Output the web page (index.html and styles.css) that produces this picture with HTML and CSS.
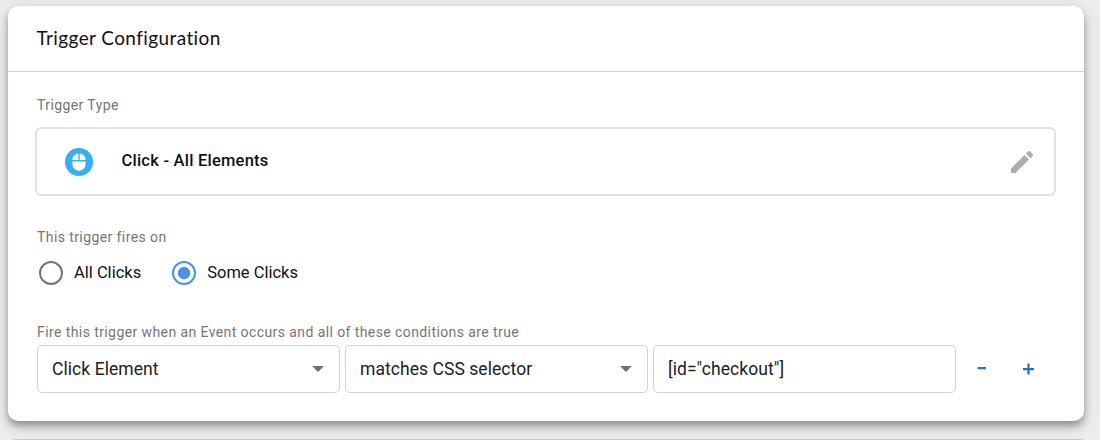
FILE: index.html
```html
<!DOCTYPE html>
<html lang="en">
<head>
<meta charset="utf-8">
<title>Trigger Configuration</title>
<link rel="stylesheet" href="styles.css">
</head>
<body>
<main class="card">
  <header class="card-header"><h1 class="title">Trigger Configuration</h1></header>
  <div class="card-body">
    <div class="label label-type"><span>Trigger Type</span></div>
    <section class="type-box">
      <svg class="type-icon" viewBox="0 0 28 28">
        <circle cx="14" cy="14" r="14" fill="#36aff0"/>
        <path fill="#fff" d="M13.3 5.5V12H7.4v-.4c0-3.3 2.6-5.9 5.9-6.1zM14.7 5.5c3.3.2 5.9 2.8 5.9 6.1v.4h-5.9zM7.4 13.4h13.2v2.8a6.6 6.6 0 0 1-13.2 0z"/>
      </svg>
      <span class="type-name">Click - All Elements</span>
      <svg class="edit-icon" viewBox="3 3 18 18">
        <path fill="#aeaeae" d="M3 17.25V21h3.75L17.81 9.94l-3.75-3.75L3 17.25zM20.71 7.04a1 1 0 0 0 0-1.41l-2.34-2.34a1 1 0 0 0-1.41 0l-1.83 1.83 3.75 3.75 1.83-1.83z"/>
      </svg>
    </section>
    <div class="label label-fires"><span>This trigger fires on</span></div>
    <div class="radios">
      <div class="radio"><span class="ring"></span><span class="radio-text">All Clicks</span></div>
      <div class="radio"><span class="ring checked"></span><span class="radio-text">Some Clicks</span></div>
    </div>
    <div class="label label-conditions"><span>Fire this trigger when an Event occurs and all of these conditions are true</span></div>
    <div class="conditions">
      <div class="field"><span>Click Element</span><i class="arrow"></i></div>
      <div class="field"><span>matches CSS selector</span><i class="arrow"></i></div>
      <div class="field"><span>[id="checkout"]</span></div>
      <svg class="actions" viewBox="0 0 60 14">
        <path fill="#3367d6" d="M1.5 5H10v2.2H1.5zM47 6h4.4V1.500h2.200V6H58v2.200h-4.400v4.400h-2.200V8.200H47z"/>
      </svg>
    </div>
  </div>
</main>
<div class="next-card"></div>
</body>
</html>
```
FILE: styles.css
```css
* { box-sizing: border-box; }
body {
  margin: 0;
  height: 440px;
  overflow: hidden;
  padding: 6px 16px 0 8px;
  background: #ebecee;
  font-family: Roboto, sans-serif;
  color: #202124;
}
.card {
  position: relative;
  width: 1075.5px;
  height: 415px;
  background: #fff;
  border-radius: 10px;
  box-shadow: 0 5px 7px rgba(0, 0, 0, .3), 0 5px 16px rgba(0, 0, 0, .14);
}
.card-header {
  height: 66px;
  padding: 0 0 2px 28.5px;
  border-bottom: 1px solid #cdcfce;
  display: flex;
  align-items: center;
}
.title {
  margin: 0;
  font: 400 19px/24px Lato, sans-serif;
  letter-spacing: .4px;
  color: #101112;
}
.card-body { padding: 0 28px 0 29px; }
.label {
  display: flex;
  align-items: center;
  font-size: 14px;
  line-height: 18px;
  letter-spacing: .41px;
  color: #757575;
}
.label-type { padding: 24px 0 13px; }
.type-box {
  width: 1021px;
  height: 69px;
  margin-left: -2px;
  border: 2px solid #e2e2e2;
  border-radius: 6px;
  display: flex;
  align-items: center;
  padding: 0 21px 0 28px;
}
.type-icon { width: 28px; height: 28px; }
.type-name {
  margin: 0 auto 2px 28.5px;
  font-size: 16.5px;
  font-weight: 500;
  line-height: 22px;
  letter-spacing: .23px;
  color: #101112;
}
.edit-icon { width: 22px; height: 22px; }
.label-fires { padding-top: 32px; }
.radios { display: flex; gap: 31px; padding: 15px 0 0 2px; }
.radio { display: flex; align-items: center; gap: 11px; height: 24px; }
.ring {
  width: 24px;
  height: 24px;
  border: 2.5px solid #757575;
  border-radius: 50%;
}
.ring.checked {
  border-color: #4d8ff2;
  background: radial-gradient(circle, #4d8ff2 5.8px, #fff 6.4px);
}
.radio-text { font-size: 16.5px; color: #101112; padding-bottom: 1px; }
.label-conditions { padding-top: 38px; }
.conditions { display: flex; gap: 5px; padding-top: 4px; }
.field {
  width: 303px;
  height: 48px;
  border: 1px solid #d0d1d3;
  border-radius: 5px;
  padding: 0 15px 0 14px;
  display: flex;
  align-items: center;
  justify-content: space-between;
  font-size: 17.5px;
  line-height: 24px;
  letter-spacing: .06px;
}
.arrow {
  border: 6px solid transparent;
  border-top-color: #707070;
  border-bottom: 0;
}
.actions { width: 60px; height: 14px; margin: 17px 0 0 15px; }
.next-card {
  width: 1070px;
  height: 2px;
  margin: 18px 0 0 5px;
  background: #c8cacd;
}
```
